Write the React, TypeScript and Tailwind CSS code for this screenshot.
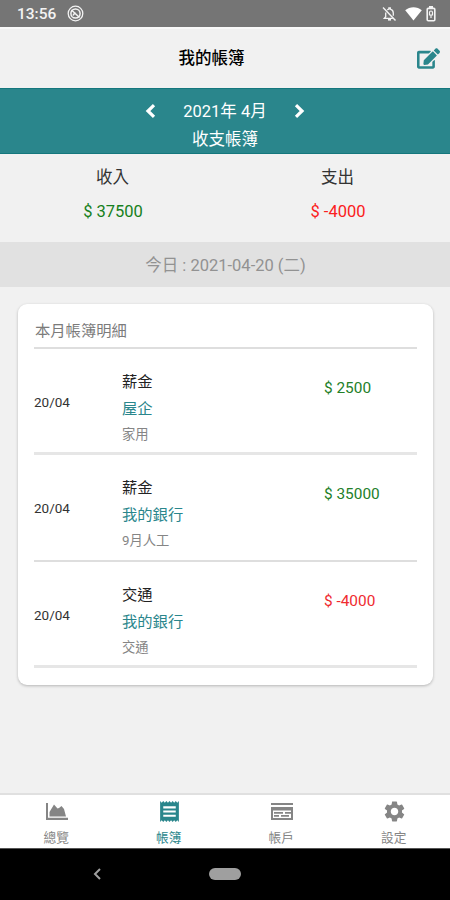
import React from "react";
import clsx from "clsx";
import { FaEdit } from "react-icons/fa";
import { MdReceipt, MdSettings } from "react-icons/md";

interface Entry {
  id: number;
  date: string;
  category: string;
  account: string;
  note: string;
  amount: number;
}

const entries: Entry[] = [
  { id: 1, date: "20/04", category: "薪金", account: "屋企", note: "家用", amount: 2500 },
  { id: 2, date: "20/04", category: "薪金", account: "我的銀行", note: "9月人工", amount: 35000 },
  { id: 3, date: "20/04", category: "交通", account: "我的銀行", note: "交通", amount: -4000 },
];

const StatusBar = () => (
  <div className="flex h-[27px] items-center bg-[#757575] pl-[17px] pr-[14px] text-[#f3f3f3]">
    <span className="pt-[2px] text-[15.5px] font-medium leading-none">13:56</span>
    <svg className="ml-[11px]" width="17" height="17" viewBox="0 0 17 17" fill="none" stroke="currentColor">
      <circle cx="8.5" cy="8.5" r="7.3" strokeWidth="1.3" />
      <circle cx="8.5" cy="8.5" r="4.6" strokeWidth="1.5" />
      <path d="M4.5 5l8 7.5M6 10.5c.6-1.7 1.4-2.3 2.8-2.2" strokeWidth="1.5" />
    </svg>
    <svg className="ml-auto" width="15" height="16" viewBox="0 0 15 16" fill="none" stroke="currentColor">
      <path d="M1 1.5l12.5 13" strokeWidth="1.4" />
      <path d="M3.7 6.5v4.2L2.3 12.3h8.5M5.3 3.9c.5-.4 1-.7 1.6-.8V2h1.4v1.1c1.9.5 3 2 3 4v2.6" strokeWidth="1.3" />
      <path d="M6 13.8h3" strokeWidth="1.6" />
    </svg>
    <svg className="ml-[8px]" width="17" height="14" viewBox="0 0 17 14" fill="white">
      <path d="M8.5 13.6L.2 3.2C2.6 1.3 5.4.3 8.5.3s5.9 1 8.3 2.9z" />
    </svg>
    <svg className="ml-[4px]" width="10" height="16" viewBox="0 0 10 16" fill="none" stroke="currentColor">
      <path d="M3 1h4" strokeWidth="2" />
      <rect x="1.2" y="2.4" width="7.6" height="12.4" rx="1" strokeWidth="1.6" />
      <path d="M3.5 9V6.5a1.5 1.5 0 0 1 3 0V9zM5 9v3" strokeWidth="1.2" />
    </svg>
  </div>
);

const Header = () => (
  <header className="grid h-[61px] grid-cols-[1fr_auto_1fr] items-center border-t-2 border-[#f8f8f8] bg-[#f1f1f1] pl-[2px] pr-[10px]">
    <span />
    <h1 className="mr-[19px] pt-[2px] text-[16.5px] font-medium leading-none text-black">我的帳簿</h1>
    <button className="justify-self-end text-[#2a868c]">
      <FaEdit size={23} />
    </button>
  </header>
);

const Chevron = ({ flip }: { flip?: boolean }) => (
  <svg
    className={clsx(flip && "-scale-x-100")}
    width="11"
    height="14"
    viewBox="0 0 11 14"
    fill="none"
    stroke="currentColor"
    strokeWidth="3.2"
  >
    <path d="M9 1.2L3 7l6 5.8" />
  </svg>
);

const MonthPicker = () => (
  <div className="flex h-[66px] flex-col items-center border-y border-[#15777d] bg-[#2a868c] pt-[8px] text-[16.5px] text-white">
    <div className="flex h-[28px] w-[160px] items-center justify-between">
      <Chevron />
      <span className="pt-[2px]">2021年 4月</span>
      <Chevron flip />
    </div>
    <div className="flex h-[28px] items-center pt-[2px]">收支帳簿</div>
  </div>
);

const money = (amount: number) => `$ ${amount}`;

const Summary = () => (
  <div className="grid h-[88px] grid-cols-2 pt-[7px] text-center text-[16.5px] leading-[34px] text-[#333]">
    <div>
      <p>收入</p>
      <p className="pl-px leading-[33px] text-[#168020]">{money(37500)}</p>
    </div>
    <div>
      <p>支出</p>
      <p className="pl-px leading-[33px] text-[#fb2020]">{money(-4000)}</p>
    </div>
  </div>
);

const EntryRow = ({ entry }: { entry: Entry }) => (
  <article className="flex h-[106.4px] border-b-[3px] border-[#e6e6e6] pt-[20px] even:border-b-2 even:border-[#dedede]">
    <p className="w-[88px] pt-[19px] text-[13.5px] leading-[28px] text-[#333]">{entry.date}</p>
    <div className="w-[202px]">
      <p className="text-[15.3px] leading-[27px] text-[#222]">{entry.category}</p>
      <p className="text-[15.3px] leading-[26px] text-[#2a868c]">{entry.account}</p>
      <p className="text-[13.3px] leading-[25px] text-[#858585]">{entry.note}</p>
    </div>
    <p
      className={clsx(
        "pt-[5px] text-[15.4px] leading-[28px]",
        entry.amount < 0 ? "text-[#ef2b30]" : "text-[#238029]"
      )}
    >
      {money(entry.amount)}
    </p>
  </article>
);

const ChartIcon = () => (
  <svg width="22" height="17" viewBox="0 0 22 17" fill="currentColor">
    <path d="M0 0h2v14.8h20V17H0z" />
    <path d="M3.5 13.5V9L8 1.5l3.5 4 1.5-.5 2.500-2L18 6l2 7.5z" />
  </svg>
);

const CardIcon = () => (
  <svg width="22" height="17" viewBox="0 0 22 17" fill="none" stroke="currentColor">
    <path d="M0 1h22" strokeWidth="2" />
    <rect x="1" y="5" width="20" height="11" strokeWidth="2" />
    <path d="M1 6.5h20M3 9.9h9M14 9.9h6M3 12.8h5M10 12.8h8" strokeWidth="1.8" />
  </svg>
);

const tabs = [
  { label: "總覽", icon: <ChartIcon /> },
  { label: "帳簿", icon: <MdReceipt size={25} />, active: true },
  { label: "帳戶", icon: <CardIcon /> },
  { label: "設定", icon: <MdSettings size={25} /> },
];

const TabBar = () => (
  <nav className="grid h-[55px] grid-cols-4 border-t-2 border-[#e0e0e0] bg-white">
    {tabs.map((tab) => (
      <div
        key={tab.label}
        className={clsx(
          "flex flex-col items-center pt-[3px]",
          tab.active ? "text-[#2a868c]" : "text-[#858585]"
        )}
      >
        <div className="flex h-[27px] items-center pl-px">{tab.icon}</div>
        <span className="text-[12.7px] leading-[25px]">{tab.label}</span>
      </div>
    ))}
  </nav>
);

const SystemNav = () => (
  <div className="grid h-[52px] grid-cols-[1fr_auto_1fr] items-center border-t border-[#555] bg-black pb-[2px] text-[#9f9f9f]">
    <svg className="ml-[93px]" width="8" height="12" viewBox="0 0 8 12" fill="none" stroke="currentColor" strokeWidth="2">
      <path d="M7 1L2 6l5 5" />
    </svg>
    <div className="h-[12px] w-[32px] rounded-full bg-[#9f9f9f]" />
    <span />
  </div>
);

const App = () => {
  return (
    <div className="flex h-[900px] w-[450px] flex-col overflow-hidden bg-[#f1f1f1] font-[Roboto,'Noto_Sans_CJK_TC',sans-serif]">
      <StatusBar />
      <Header />
      <MonthPicker />
      <Summary />
      <div className="flex h-[45px] items-center justify-center bg-[#e1e1e1] pl-px pt-[4px] text-[16.5px] text-[#929292]">
        今日 : 2021-04-20 (二)
      </div>
      <main className="flex-1 px-[18px] pt-[17px]">
        <section className="mr-[-1px] h-[381px] rounded-[9px] bg-white px-[16px] pt-[12px] shadow-[0_1px_3px_rgba(0,0,0,0.25)]">
          <h2 className="h-[33px] border-b-2 border-[#dedede] pl-px text-[15.3px] leading-[31px] text-[#7b7b7b]">
            本月帳簿明細
          </h2>
          <div>
            {entries.map((entry) => (
              <EntryRow key={entry.id} entry={entry} />
            ))}
          </div>
        </section>
      </main>
      <TabBar />
      <SystemNav />
    </div>
  );
};

export default App;
